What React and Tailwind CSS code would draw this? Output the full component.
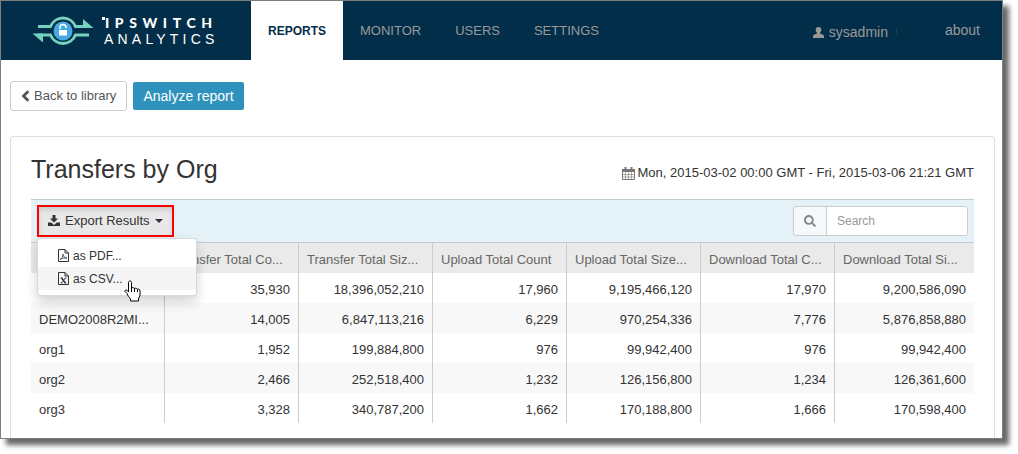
import { FaSearch } from "react-icons/fa";

const navItems = ["MONITOR", "USERS", "SETTINGS"];

const columns = [
    "",
    "Transfer Total Co...",
    "Transfer Total Siz...",
    "Upload Total Count",
    "Upload Total Size...",
    "Download Total C...",
    "Download Total Si...",
];

const rows = [
    ["", "35,930", "18,396,052,210", "17,960", "9,195,466,120", "17,970", "9,200,586,090"],
    ["DEMO2008R2MI...", "14,005", "6,847,113,216", "6,229", "970,254,336", "7,776", "5,876,858,880"],
    ["org1", "1,952", "199,884,800", "976", "99,942,400", "976", "99,942,400"],
    ["org2", "2,466", "252,518,400", "1,232", "126,156,800", "1,234", "126,361,600"],
    ["org3", "3,328", "340,787,200", "1,662", "170,188,800", "1,666", "170,598,400"],
];

function LogoMark() {
    return (
        <svg width="62" height="32" viewBox="0 0 62 32" fill="none" className="shrink-0" aria-hidden="true">
            <g stroke="#76d2be" strokeWidth="3">
                <path d="M6 11.500H18.500A13.500 13.500 0 0 1 43.500 11.500H57" />
                <path d="M57 20H43.500A13.500 13.500 0 0 1 18.500 20H6" />
            </g>
            <path d="M51 4l10.500 9H51z" fill="#76d2be" />
            <path d="M11 27.500L.5 18.500H11z" fill="#76d2be" />
            <circle cx="31" cy="16" r="9.500" fill="#45aae2" />
            <path d="M28 14v-1.500a3 3 0 0 1 6 0V13" stroke="#fff" strokeWidth="1.500" />
            <rect x="27" y="15" width="8" height="5.500" fill="#fff" />
        </svg>
    );
}

function UserIcon() {
    return (
        <svg width="11" height="11" viewBox="0 0 11 11" fill="currentColor" aria-hidden="true">
            <ellipse cx="5.500" cy="3" rx="2.800" ry="3" />
            <path d="M4 5h3v1.500l3 1.300c.7.300 1 .8 1 1.400V11H0V9.200c0-.6.3-1.100 1-1.400l3-1.300z" />
        </svg>
    );
}

function ChevronIcon() {
    return (
        <svg width="9" height="12" viewBox="0 0 9 12" fill="none" stroke="currentColor" strokeWidth="2.800" aria-hidden="true">
            <path d="M7.300 1.200L2.500 6l4.800 4.800" />
        </svg>
    );
}

function CalendarIcon() {
    return (
        <svg width="13" height="13" viewBox="0 0 13 13" fill="none" stroke="currentColor" aria-hidden="true">
            <path d="M0 2h13v3H0z" fill="currentColor" stroke="none" />
            <path d="M.5 2.500h12v10H.5z" />
            <path d="M.5 7.500h12M.5 10h12M3.500 5v7.500M6.500 5v7.500M9.500 5v7.500" strokeOpacity=".6" />
            <path d="M3.500 0v3.500M9.500 0v3.500" strokeWidth="2" />
        </svg>
    );
}

function DownloadIcon() {
    return (
        <svg width="12" height="12" viewBox="0 0 12 12" fill="currentColor" aria-hidden="true">
            <path d="M4.500 0h3v3.500H10L6 7.500l-4-4h2.500z" />
            <path d="M0 7.500h3.200L6 10l2.800-2.500H12V11H0z" />
        </svg>
    );
}

function FileIcon({ children }) {
    return (
        <svg width="11" height="13" viewBox="0 0 11 13" fill="none" stroke="currentColor" aria-hidden="true">
            <path d="M.5.5h6.500l3.500 3.500v8.500H.5z" />
            <path d="M7 .5V4h3.500" />
            {children}
        </svg>
    );
}

function HandCursor() {
    return (
        <svg width="17" height="22" viewBox="0 0 17 22" aria-hidden="true">
            <path
                d="M4.500 2.500c0-1 .6-1.500 1.500-1.500s1.500.5 1.500 1.500v5.500c.3-.5 2.500-.6 3 .5.800-.6 2.500-.3 2.800.8 1.200-.5 2.700 0 2.700 1.500v4.200c0 1.500-1.500 2.500-1.500 4V21h-8v-2c-1-1.500-3-3.500-3.500-5.500L1 11.500c-.5-1 .8-2 2-1.200L4.500 12z"
                fill="#fff"
                stroke="#000"
            />
            <path d="M7.500 8v4M10.500 8.500V12M13.500 9.500V12" stroke="#000" fill="none" />
        </svg>
    );
}

function Header() {
    return (
        <header className="flex h-[59px] bg-[#032e49] text-[13px] text-[#999]">
            <a href="#home" className="flex w-[250px] items-center gap-[10px] pl-[31px] text-white">
                <LogoMark />
                <span className="flex flex-col text-[14px] leading-4">
                    <span className="flex items-center">
                        <span className="-ml-[2px] mb-[9px] h-[3px] w-[3px] bg-white" />
                        <span className="font-[Lato] font-black tracking-[0.4em]">IPSWITCH</span>
                    </span>
                    <span className="tracking-[0.3em]">ANALYTICS</span>
                </span>
            </a>
            <nav className="flex">
                <a href="#reports" className="flex w-[92px] items-center justify-center bg-white text-[12px] font-bold text-[#032e49]">REPORTS</a>
                {navItems.map(item => (
                    <a key={item} href={"#" + item.toLowerCase()} className="flex items-center px-[17px]">{item}</a>
                ))}
            </nav>
            <div className="ml-auto flex items-center pr-[22px] text-[14px]">
                <a href="#account" className="flex items-center gap-[5px] pt-[3px] leading-[12px]">
                    <UserIcon />
                    sysadmin
                </a>
                <span className="ml-2 h-[6px] w-px bg-[#24394d]" />
                <a href="#about" className="ml-12">about</a>
            </div>
        </header>
    );
}

function ExportMenu() {
    return (
        <div className="relative">
            <button className="flex h-8 items-center gap-[5px] border-2 border-[#ff0000] bg-[#e8e8e8] px-[9px] text-[13px] text-[#333] shadow-[inset_0_3px_5px_rgba(0,0,0,0.125)]">
                <DownloadIcon />
                Export Results
                <span className="border-x-4 border-t-4 border-x-transparent border-t-[#333]" />
            </button>
            <ul className="absolute top-[33px] left-0 w-40 rounded border border-black/15 bg-white py-[5px] text-[12px] text-[#333] shadow-[0_6px_12px_rgba(0,0,0,0.175)]">
                <li>
                    <button className="flex h-[23px] w-full items-center gap-1 pl-5">
                        <FileIcon>
                            <path d="M2 10.500c2-1 3-3 3-5.500.3 2.500 1.500 4 4 4-2.500-.3-5 .2-7 1.500z" strokeWidth=".8" />
                        </FileIcon>
                        as PDF...
                    </button>
                </li>
                <li>
                    <button className="flex h-[23px] w-full items-center gap-1 bg-[#f5f5f5] pl-5">
                        <FileIcon>
                            <path d="M3.500 6l4 5" strokeWidth="1.500" />
                            <path d="M7.500 6l-4 5M2.500 6h2M6.500 6h2M2.500 11h2M6.500 11h2" strokeWidth=".8" />
                        </FileIcon>
                        as CSV...
                    </button>
                </li>
                <li className="pointer-events-none absolute top-[41px] left-[86px]">
                    <HandCursor />
                </li>
            </ul>
        </div>
    );
}

function ReportTable() {
    return (
        <table className="w-full table-fixed border-separate border-spacing-0 text-[13px] text-[#333]">
            <thead>
                <tr className="h-[30px] bg-[#eaeaea] text-[#666]">
                    {columns.map(col => (
                        <th key={col} className="w-[134px] truncate border-r border-[#ccc] px-2 pt-1 text-left font-normal last:w-auto last:border-r-0">{col}</th>
                    ))}
                </tr>
            </thead>
            <tbody>
                {rows.map((row, i) => (
                    <tr key={i} className="h-[30px] even:bg-[#f8f8f8]">
                        {row.map((cell, j) => (
                            <td key={j} className="truncate border-r border-[#ccc] px-2 pt-1 text-right first:text-left last:border-r-0">{cell}</td>
                        ))}
                    </tr>
                ))}
            </tbody>
        </table>
    );
}

export default function App() {
    return (
        <div className="bg-white pr-[15px] pb-[15px] font-['Liberation_Sans',Arial,sans-serif]">
            <div className="border border-[#7f7f7f] bg-white shadow-[6px_6px_5px_rgba(0,0,0,0.6)]">
                <Header />
                <main className="pt-[21px] pr-[7px] pl-[9px]">
                    <div className="flex items-center gap-[6px] text-[13px]">
                        <button className="flex h-[30px] items-center gap-1 rounded-[3px] border border-[#ccc] bg-white px-[10px] text-[#555]">
                            <ChevronIcon />
                            Back to library
                        </button>
                        <button className="h-7 rounded-[2px] bg-[#2f92bd] px-[10px] text-[14px] text-white">Analyze report</button>
                    </div>
                    <section className="mt-[25px] rounded-t border border-b-0 border-[#ddd] px-5 pb-[15px]">
                        <div className="flex h-[62px] items-center justify-between pt-1">
                            <h1 className="text-[25px] text-[#333]">Transfers by Org</h1>
                            <p className="flex items-center gap-[3px] pt-[6px] text-[13px] text-[#333]">
                                <span className="text-[#777]"><CalendarIcon /></span>
                                Mon, 2015-03-02 00:00 GMT - Fri, 2015-03-06 21:21 GMT
                            </p>
                        </div>
                        <div className="flex h-11 items-center justify-between border-y border-[#bfccd3] bg-[#e4f1f7] px-[6px]">
                            <ExportMenu />
                            <label className="flex h-[30px] w-[175px] overflow-hidden rounded-[3px] border border-[#ccc] bg-[#f5f9fc]">
                                <span className="flex w-8 items-center justify-center text-[#888]">
                                    <FaSearch className="h-3 w-3" />
                                </span>
                                <input
                                    type="text"
                                    aria-label="Search"
                                    placeholder="Search"
                                    className="min-w-0 flex-1 border-l border-[#ccc] bg-white px-[10px] text-[12px] outline-none placeholder:text-[#999]"
                                />
                            </label>
                        </div>
                        <ReportTable />
                    </section>
                </main>
            </div>
        </div>
    );
}
